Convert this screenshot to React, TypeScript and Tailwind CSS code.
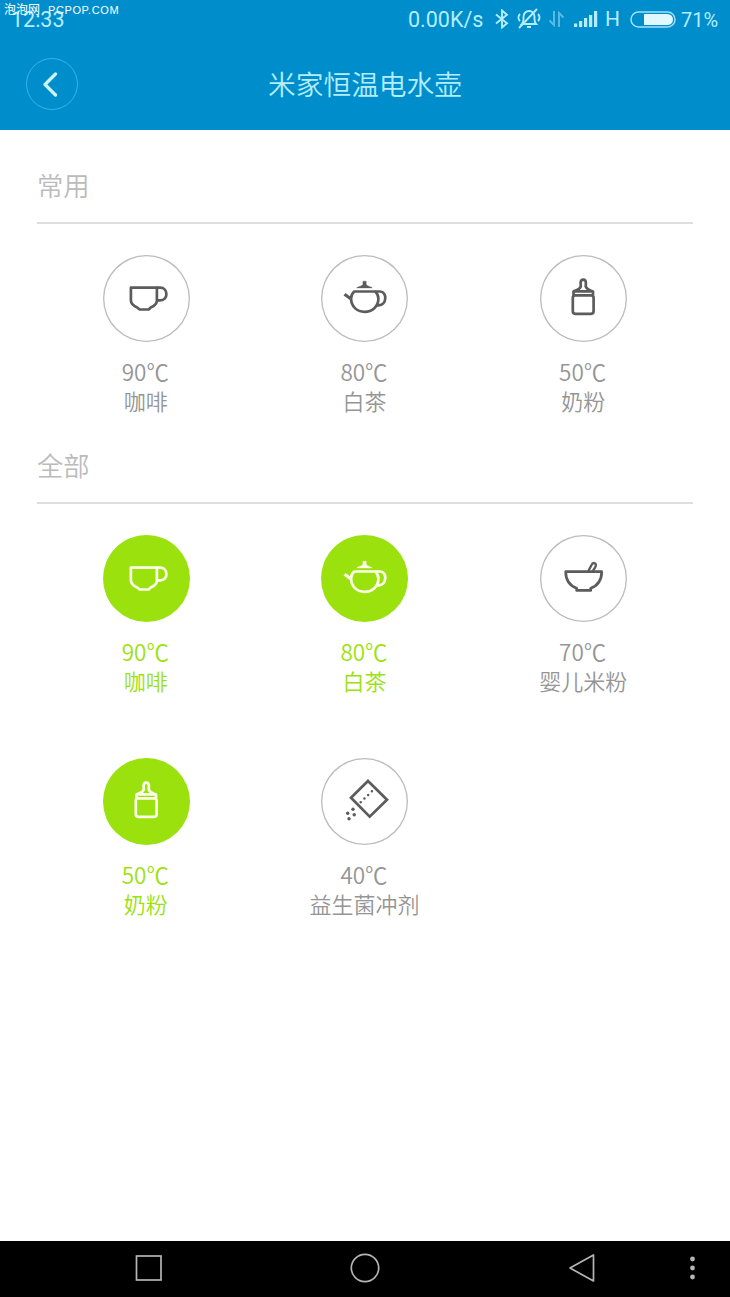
import type { ReactNode } from "react";

const cup = (
  <>
    <path d="M28.700 32.700H54.700V45.500C54.700 49 51 51.500 48.500 52.500L46.500 54.500H37.500L35 52.500C32.500 51.300 28.700 49 28.700 45.500Z" />
    <path d="M54.700 32.700H58C66 32.700 66.500 45.300 58 45.300H54.700" />
  </>
);

const teapot = (
  <>
    <path d="M34 36.500H55C57.200 38.500 58.200 41 58.200 43.500C58.200 51.500 52 56.800 44.400 56.800C36.700 56.800 30.900 51.500 30.900 43.500C30.900 41 31.800 38.500 34 36.500Z" />
    <path d="M55 36.500H60C67.200 36.500 66.800 50.300 58.500 50.300H56.500" />
    <path d="M30.900 44L24.300 39.200" strokeWidth={3.200} />
    <path d="M36.500 32.900C38 31.200 42.700 31.200 42.700 29V26.200H46V29C46 31.200 50.500 31.200 52 32.900Z" fill="currentColor" strokeWidth={0.400} />
  </>
);

const bottle = (
  <>
    <rect x="33.600" y="40.300" width="20.800" height="18.500" rx="2.500" />
    <path d="M34.300 40.300V36.500C36.500 35.500 40.300 35 41.600 31.500L41.400 28C41.400 23.500 46.700 23.500 46.700 28L46.500 31.500C47.800 35 51.500 35.500 53.800 36.500V40.300M34.300 36.300H53.800" />
  </>
);

const bowl = (
  <>
    <path d="M26.500 36.700H62.500C62.500 46 58.500 50.500 51.500 53.300V55.400H37.500V53.300C30.500 50.500 26.500 46 26.500 36.700Z" />
    <path d="M48.800 36.700L52.300 30C54 26.500 58 28.300 56.200 31.800L53.300 36.700" strokeWidth={2.400} />
  </>
);

const packet = (
  <>
    <path d="M47.800 23L66.800 41.800L49.500 58.700L30.800 39.800Z" strokeLinejoin="miter" />
    <path d="M51.700 33.300L40 44.700" strokeLinecap="round" strokeDasharray="0 5.200" strokeWidth={2.500} />
    <g fill="currentColor" stroke="none">
      <circle cx="32.800" cy="51.300" r="1.700" />
      <circle cx="27.500" cy="55.200" r="1.700" />
      <circle cx="34" cy="56.800" r="1.700" />
      <circle cx="28.800" cy="60.700" r="1.700" />
    </g>
  </>
);

type Mode = { temp: number; name: string; icon: ReactNode; active?: boolean };

const favourites: Mode[] = [
  { temp: 90, name: "咖啡", icon: cup },
  { temp: 80, name: "白茶", icon: teapot },
  { temp: 50, name: "奶粉", icon: bottle },
];

const all: Mode[] = [
  { temp: 90, name: "咖啡", icon: cup, active: true },
  { temp: 80, name: "白茶", icon: teapot, active: true },
  { temp: 70, name: "婴儿米粉", icon: bowl },
  { temp: 50, name: "奶粉", icon: bottle, active: true },
  { temp: 40, name: "益生菌冲剂", icon: packet },
];

function ModeItem({ mode }: { mode: Mode }) {
  return (
    <div className="flex flex-col items-center">
      <div
        className={
          mode.active
            ? "size-[87px] rounded-full bg-[#9be10d] text-[#fbffe8]"
            : "size-[87px] rounded-full text-[#5c5c5c] shadow-[inset_0_0_0_1.3px_#bcbcbc]"
        }
      >
        <svg viewBox="0.8 0 87 87" className="size-full" fill="none" stroke="currentColor" strokeWidth={2.700} strokeLinejoin="round">
          {mode.icon}
        </svg>
      </div>
      <div
        className={
          mode.active
            ? "mt-[15px] mb-[2px] text-center text-[22px] leading-[29px] text-[#9be10d]"
            : "mt-[15px] mb-[2px] text-center text-[22px] leading-[29px] text-[#959595]"
        }
      >
        <div className="-ml-[2px] text-[22.500px]">{mode.temp}℃</div>
        <div className="-ml-px">{mode.name}</div>
      </div>
    </div>
  );
}

function Section({ title, modes }: { title: string; modes: Mode[] }) {
  return (
    <section>
      <h2 className="h-[56px] border-b-2 border-[#dedede] text-[26.300px] leading-[34px] text-[#bbbbbb]">{title}</h2>
      <div className="grid grid-cols-3 gap-y-[61px] pt-[31px]">
        {modes.map((m) => (
          <ModeItem key={m.name} mode={m} />
        ))}
      </div>
    </section>
  );
}

function StatusBar() {
  return (
    <div className="relative flex h-[38px] items-center justify-between pl-[11px] pr-[11px] font-['Roboto','Noto_Sans_CJK_SC',sans-serif] text-[20px] font-normal text-[#b5edff]">
      <span className="pt-[2px] text-[21.500px]">12:33</span>
      <div className="absolute left-[4px] top-[2px] flex gap-[8px] whitespace-pre font-['Liberation_Sans','Noto_Sans_CJK_SC',sans-serif] text-[12px] leading-[17px] text-white">
        <span>泡泡网</span>
        <span className="text-[11px] tracking-[0.600px]">PCPOP.COM</span>
      </div>
      <div className="flex items-center">
        <span className="w-[79px] pt-[2px] text-[21.500px]">0.00K/s</span>
        <svg className="ml-[8px] h-[20px] w-[14px]" viewBox="0 0 14 20" fill="none" stroke="currentColor" strokeWidth="1.900">
          <path d="M1 5.500L12 14.200L7 18.500V1.500L12 5.800L1 14.500" />
        </svg>
        <svg className="ml-[8px] h-[22px] w-[24px]" viewBox="0 0 24 22" fill="none" stroke="currentColor" strokeWidth="1.900">
          <path d="M5 16C7 14 6.500 12 6.500 9C6.500 1 17.500 1 17.500 9C17.500 12 17 14 19 16ZM10 19H14M2 20L20 1M3 6C1 8 1 11 3 13M21 6C23 8 23 11 21 13" />
        </svg>
        <svg className="ml-[8px] h-[16px] w-[15px] text-[#57b9e4]" viewBox="0 0 15 16" fill="none" stroke="currentColor" strokeWidth="2">
          <path d="M5 0V14L0.500 9.500M10 16V2L14.500 6.500" />
        </svg>
        <svg className="ml-[10px] h-[16px] w-[24px]" viewBox="0 0 24 16" fill="currentColor">
          <path d="M0 12.500H3.200V16H0ZM5 10H8.200V16H5ZM10 7H13.200V16H10ZM15 4H18.200V16H15ZM20 0H23.200V16H20Z" />
        </svg>
        <span className="ml-[7px] w-[16px] pt-[2px] text-[21px]">H</span>
        <svg className="ml-[9px] h-[17px] w-[46px]" viewBox="0 0 46 17" fill="none">
          <rect x="1" y="1" width="44" height="15" rx="7.500" stroke="#9fe2fb" strokeWidth="1.500" />
          <path d="M14 3H37.500A5.500 5.500 0 0 1 37.500 14H14Z" fill="#e0f8ff" />
        </svg>
        <span className="ml-[5px] w-[38px] pt-[2px]">71%</span>
      </div>
    </div>
  );
}

export default function App() {
  return (
    <div className="flex h-[1297px] w-[730px] flex-col overflow-hidden bg-white font-['Noto_Sans_CJK_SC',sans-serif] font-[350]">
      <header className="h-[130px] bg-[#008dcc]">
        <StatusBar />
        <div className="grid h-[92px] grid-cols-[52px_1fr_52px] items-center px-[26px]">
          <div className="flex size-[52px] items-center justify-center rounded-full border-[1.500px] border-[#36b3e8]">
            <svg className="-ml-[5px] h-[25px] w-[16px]" viewBox="0 0 16 25" fill="none" stroke="#c9f5ff" strokeWidth="3.200" strokeLinecap="round" strokeLinejoin="round">
              <path d="M13.500 2L3 12.500L13.500 23" />
            </svg>
          </div>
          <h1 className="-mt-[2px] text-center text-[27.700px] leading-[40px] text-[#b3eeff]">米家恒温电水壶</h1>
        </div>
      </header>
      <main className="flex flex-1 flex-col gap-[31px] px-[37px] pt-[38px]">
        <Section title="常用" modes={favourites} />
        <Section title="全部" modes={all} />
      </main>
      <nav className="h-[56px] bg-black">
        <svg className="h-[56px] w-full" viewBox="0 0 730 56" fill="none" stroke="#b5b5b5" strokeWidth="1.700">
          <rect x="136.500" y="15" width="24.500" height="24" />
          <circle cx="365" cy="27" r="13.700" />
          <path d="M593.500 14V40L570 27Z" strokeLinejoin="round" />
          <g fill="#b5b5b5" stroke="none">
            <circle cx="692.500" cy="18" r="2.400" />
            <circle cx="692.500" cy="27" r="2.400" />
            <circle cx="692.500" cy="36" r="2.400" />
          </g>
        </svg>
      </nav>
    </div>
  );
}
